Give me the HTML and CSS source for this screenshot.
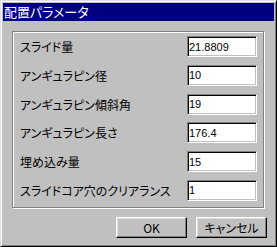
FILE: index.html
```html
<!DOCTYPE html>
<html lang="ja">

<head>
  <meta charset="UTF-8">
  <title>配置パラメータ</title>
  <link rel="stylesheet" href="styles.css">
</head>

<body>
  <div class="window">
    <div class="titlebar">配置パラメータ</div>

    <div class="group">
      <label>スライド量</label>
      <input type="text" value="21.8809">

      <label>アンギュラピン径</label>
      <input type="text" value="10">

      <label>アンギュラピン傾斜角</label>
      <input type="text" value="19">

      <label>アンギュラピン長さ</label>
      <input type="text" value="176.4">

      <label>埋め込み量</label>
      <input type="text" value="15">

      <label>スライドコア穴のクリアランス</label>
      <input type="text" value="1">
    </div>

    <div class="buttons">
      <button>OK</button>
      <button>キャンセル</button>
    </div>
  </div>
</body>

</html>
```

FILE: styles.css
```css
body {
  margin: 0;
  background: #c0c0c0;
  font-family: "Noto Sans CJK JP", sans-serif;
  font-size: 12px;
  color: #000;
}

.window {
  box-sizing: border-box;
  width: 277px;
  height: 247px;
  padding: 2px;
  background: #c0c0c0;
  border: 1px solid;
  border-color: #dfdfdf #000 #000 #dfdfdf;
  box-shadow: inset 1px 1px #fff, inset -1px -1px #808080;
  display: flex;
  flex-direction: column;
}

.titlebar {
  height: 18px;
  line-height: 18px;
  padding-left: 1px;
  background: #000080;
  color: #fff;
  font-size: 13px;
  font-feature-settings: "palt";
}

.group {
  box-sizing: border-box;
  height: 177px;
  margin: 10px 10px 0 9px;
  padding: 4px 6px 0 7px;
  border: 1px solid #808080;
  box-shadow: inset 1px 1px #fff, 1px 1px #fff;
  display: grid;
  grid-template-columns: 1fr 70px;
  grid-auto-rows: 21px;
  row-gap: 7.8px;
  align-items: center;
}

.group label {
  font-feature-settings: "palt";
  white-space: nowrap;
}

.group input {
  box-sizing: border-box;
  width: 70px;
  height: 21px;
  margin: 0;
  padding: 0 1px;
  border: 1px solid;
  border-color: #808080 #fff #fff #808080;
  box-shadow: inset 1px 1px #000, inset -1px -1px #c0c0c0;
  background: #fff;
  font-family: "Liberation Sans", sans-serif;
  font-size: 11px;
  color: #000;
  outline: none;
}

.buttons {
  display: flex;
  justify-content: flex-end;
  gap: 9px;
  margin: 9px 7px 0 0;
}

.buttons button {
  box-sizing: border-box;
  width: 71px;
  height: 21px;
  padding: 0;
  background: #c0c0c0;
  border: 1px solid;
  border-color: #fff #000 #000 #fff;
  box-shadow: inset -1px -1px #808080, inset 1px 1px #dfdfdf;
  font-family: "Noto Sans CJK JP", sans-serif;
  font-size: 12px;
  font-feature-settings: "palt";
  color: #000;
}
```
